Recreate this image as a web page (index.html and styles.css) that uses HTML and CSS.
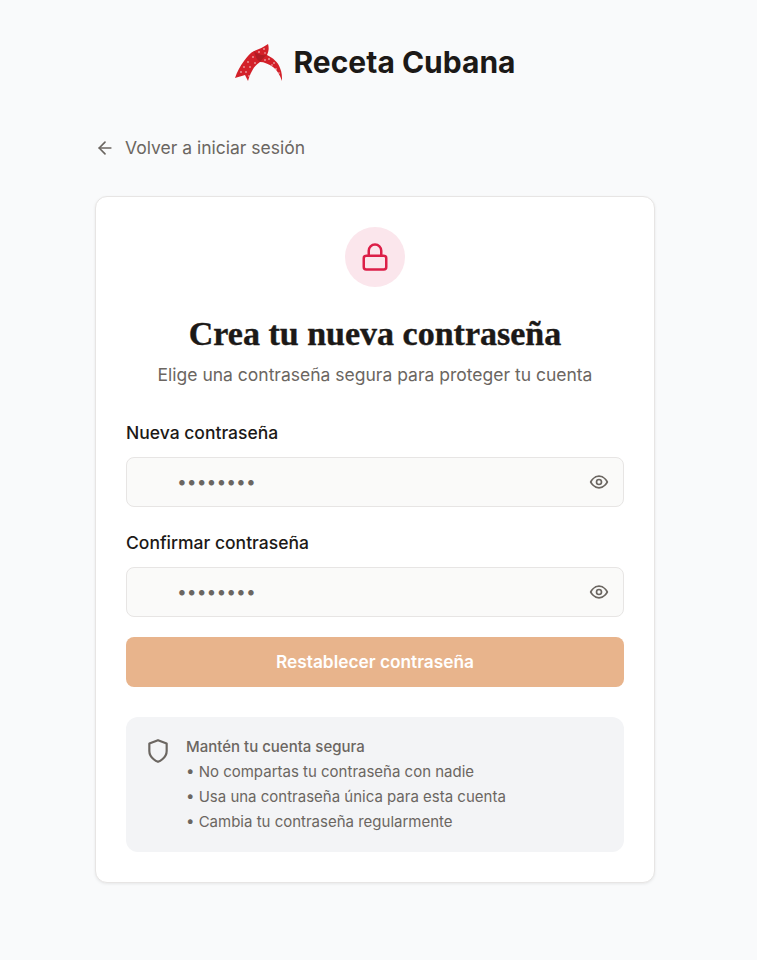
FILE: index.html
```html
<!DOCTYPE html>
<html lang="es">

<head>
    <meta charset="UTF-8">
    <meta name="viewport" content="width=device-width, initial-scale=1.0">
    <title>Receta Cubana</title>
    <link rel="stylesheet" href="styles.css">
</head>

<body>
    <div class="page">
        <header class="brand">
            <svg class="brand-logo" viewBox="0 0 48 40" width="48" height="40">
                <path d="M0 36 C2 30 5 24 9 19 C12 15 15 11 19 9 C24 7 29 5 33 2 C34 5 34 9 32 13 C38 16 43 20 45 26 C47 30 47 35 47 39 C45 33 42 28 38 25 C34 22 29 20 25 20 C22 22 19 25 17 29 C15 32 14 36 13 39 C12 37 11 35 10 33 C7 34 3 35 0 36 Z" fill="#d32029"/>
                <path d="M19 9 C22 12 27 14 32 13 C29 15 27 17 25 20 C22 18 20 14 19 9 Z" fill="#b01c24"/>
                <g fill="#f8dede">
                    <circle cx="6" cy="30" r=".8"/><circle cx="9" cy="25" r=".8"/><circle cx="13" cy="20" r=".8"/>
                    <circle cx="11" cy="30" r=".8"/><circle cx="15" cy="25" r=".8"/><circle cx="18" cy="15" r=".8"/>
                    <circle cx="20" cy="21" r=".8"/><circle cx="24" cy="10" r=".8"/><circle cx="29" cy="7" r=".8"/>
                    <circle cx="30" cy="11" r=".7"/><circle cx="34" cy="17" r=".8"/><circle cx="30" cy="18" r=".8"/>
                    <circle cx="39" cy="21" r=".8"/><circle cx="41" cy="27" r=".8"/><circle cx="37" cy="23" r=".7"/>
                    <circle cx="44" cy="31" r=".7"/><circle cx="14" cy="34" r=".7"/>
                </g>
            </svg>
            <span class="brand-name">Receta Cubana</span>
        </header>

        <a class="back-link" href="#">
            <svg viewBox="0 0 24 24" width="20" height="20" fill="none" stroke="currentColor" stroke-width="2" stroke-linecap="round" stroke-linejoin="round">
                <path d="M19 12H5"/>
                <path d="M12 19l-7-7 7-7"/>
            </svg>
            Volver a iniciar sesión
        </a>

        <main class="card">
            <div class="lock-badge">
                <svg viewBox="0 0 24 24" width="30" height="30" fill="none" stroke="#dc1f48" stroke-width="2" stroke-linecap="round" stroke-linejoin="round">
                    <rect x="3" y="11" width="18" height="11" rx="2" ry="2"/>
                    <path d="M7 11V7a5 5 0 0 1 10 0v4"/>
                </svg>
            </div>
            <h1 class="title">Crea tu nueva contraseña</h1>
            <p class="subtitle">Elige una contraseña segura para proteger tu cuenta</p>

            <form class="form">
                <div class="field">
                    <label class="label" for="pw1">Nueva contraseña</label>
                    <div class="input-wrap">
                        <input class="input" id="pw1" type="password" value="password">
                        <svg class="eye" viewBox="0 0 24 24" width="20" height="20" fill="none" stroke="currentColor" stroke-width="2" stroke-linecap="round" stroke-linejoin="round">
                            <path d="M2 12s3.6-7 10-7 10 7 10 7-3.6 7-10 7-10-7-10-7z"/>
                            <circle cx="12" cy="12" r="3"/>
                        </svg>
                    </div>
                </div>
                <div class="field">
                    <label class="label" for="pw2">Confirmar contraseña</label>
                    <div class="input-wrap">
                        <input class="input" id="pw2" type="password" value="password">
                        <svg class="eye" viewBox="0 0 24 24" width="20" height="20" fill="none" stroke="currentColor" stroke-width="2" stroke-linecap="round" stroke-linejoin="round">
                            <path d="M2 12s3.6-7 10-7 10 7 10 7-3.6 7-10 7-10-7-10-7z"/>
                            <circle cx="12" cy="12" r="3"/>
                        </svg>
                    </div>
                </div>
                <button class="submit" type="button">Restablecer contraseña</button>
            </form>

            <section class="tips">
                <svg class="tips-icon" viewBox="0 0 24 24" width="26" height="26" fill="none" stroke="currentColor" stroke-width="2" stroke-linecap="round" stroke-linejoin="round">
                    <path d="M12 22s8-3 8-10V5l-8-3-8 3v7c0 7 8 10 8 10z"/>
                </svg>
                <div class="tips-text">
                    <p class="tips-title">Mantén tu cuenta segura</p>
                    <p>• No compartas tu contraseña con nadie</p>
                    <p>• Usa una contraseña única para esta cuenta</p>
                    <p>• Cambia tu contraseña regularmente</p>
                </div>
            </section>
        </main>
    </div>
</body>

</html>
```

FILE: styles.css
```css
* {
    box-sizing: border-box;
}

body {
    margin: 0;
    padding-right: 7px;
    min-height: 960px;
    background-color: #f9fafb;
    font-family: Inter, "Liberation Sans", sans-serif;
    color: #1c1917;
}

.page {
    width: 560px;
    margin: 0 auto;
    padding-top: 40px;
}

.brand {
    display: flex;
    justify-content: center;
    align-items: center;
    gap: 11px;
    height: 44px;
}

.brand-name {
    font-size: 30px;
    font-weight: 700;
    line-height: 36px;
    color: #1c1917;
}

.back-link {
    display: flex;
    align-items: center;
    gap: 10px;
    margin-top: 40px;
    height: 47px;
    font-size: 17.5px;
    color: #6b6661;
    text-decoration: none;
}

.card {
    margin-top: 25px;
    padding: 30px;
    background-color: #fff;
    border: 1px solid #e7e5e4;
    border-radius: 12px;
    box-shadow: 0 1px 3px rgba(0, 0, 0, 0.08);
}

.lock-badge {
    display: flex;
    justify-content: center;
    align-items: center;
    width: 60px;
    height: 60px;
    margin: 0 auto;
    border-radius: 50%;
    background-color: #fbe6ec;
}

.title {
    margin: 29px 0 0;
    font-family: "Liberation Serif", serif;
    font-size: 34px;
    font-weight: 700;
    line-height: 36px;
    text-align: center;
    color: #1c1917;
    -webkit-text-stroke: 0.4px #1c1917;
}

.subtitle {
    margin: 10px 0 0;
    font-size: 17.5px;
    line-height: 26px;
    text-align: center;
    color: #6b6661;
}

.form {
    margin-top: 32px;
}

.field + .field {
    margin-top: 23px;
}

.label {
    display: block;
    margin-bottom: 11px;
    font-size: 17.5px;
    font-weight: 500;
    line-height: 26px;
}

.input-wrap {
    position: relative;
}

.input {
    display: block;
    width: 100%;
    height: 50px;
    padding: 0 48px 1px 50px;
    background-color: #fafaf9;
    border: 1px solid #e7e5e4;
    border-radius: 8px;
    font-family: Inter, "Liberation Sans", sans-serif;
    font-size: 17.5px;
    color: #6b6661;
    outline: none;
}

.eye {
    position: absolute;
    top: 15px;
    right: 15px;
    color: #6b6661;
}

.submit {
    display: block;
    width: 100%;
    height: 50px;
    margin-top: 20px;
    padding: 0 0 2px;
    background-color: #e8b48c;
    border: none;
    border-radius: 8px;
    font-family: Inter, "Liberation Sans", sans-serif;
    font-size: 17.3px;
    font-weight: 600;
    color: #fff;
}

.tips {
    display: flex;
    gap: 15px;
    margin-top: 30px;
    padding: 16.5px 19px 18.5px;
    background-color: #f3f4f6;
    border-radius: 12px;
}

.tips-icon {
    flex: none;
    margin-top: 4px;
    color: #6b6661;
}

.tips-text {
    font-size: 15px;
    line-height: 25px;
    color: #6b6661;
}

.tips-text p {
    margin: 0;
}

.tips-title {
    font-weight: 500;
}
```
